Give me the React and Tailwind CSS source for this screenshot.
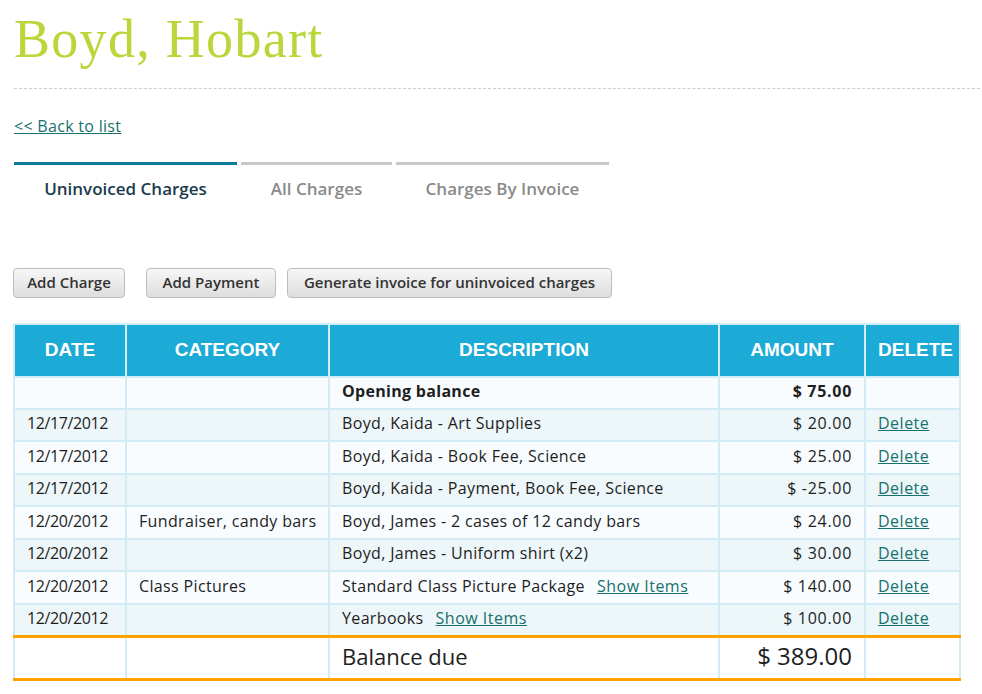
import React from 'react';

const rows = [
  { date: '12/17/2012', cat: '', desc: 'Boyd, Kaida - Art Supplies', amount: '$ 20.00' },
  { date: '12/17/2012', cat: '', desc: 'Boyd, Kaida - Book Fee, Science', amount: '$ 25.00' },
  { date: '12/17/2012', cat: '', desc: 'Boyd, Kaida - Payment, Book Fee, Science', amount: '$ -25.00' },
  { date: '12/20/2012', cat: 'Fundraiser, candy bars', desc: 'Boyd, James - 2 cases of 12 candy bars', amount: '$ 24.00' },
  { date: '12/20/2012', cat: '', desc: 'Boyd, James - Uniform shirt (x2)', amount: '$ 30.00' },
  { date: '12/20/2012', cat: 'Class Pictures', desc: 'Standard Class Picture Package', items: true, amount: '$ 140.00' },
  { date: '12/20/2012', cat: '', desc: 'Yearbooks', items: true, amount: '$ 100.00' },
];

const Btn = ({ children, className = '' }) => (
  <button className={`h-[30px] px-[12px] rounded-[4px] border border-[#bdbdbd] bg-gradient-to-b from-[#f7f7f7] to-[#dedede] text-[15px] font-semibold text-[#333] ${className}`}>
    {children}
  </button>
);

const cell = 'border-2 border-[#d3ebf4] px-3';
const link = 'text-[#17716c] underline tracking-[0.5px]';

export default function App() {
  return (
    <div className="min-h-screen bg-white px-[14px] text-[16px] text-[#1e1e1e]" style={{ fontFamily: '"Open Sans", Arial, sans-serif' }}>
      <h1 className="pt-[8px] text-[54px] leading-[62px] text-[#b9d63a] tracking-[1.3px]" style={{ fontFamily: '"Liberation Serif", serif' }}>
        Boyd, Hobart
      </h1>
      <div className="mt-[18px] w-[966px] border-t border-dashed border-[#cccccc]" />

      <a href="#" className="mt-[26px] inline-block text-[16px] leading-[22px] text-[#17716c] underline tracking-[0.3px]">
        &lt;&lt; Back to list
      </a>

      <div className="mt-[24px] flex gap-[4px]">
        <div className="w-[223px] border-t-[3px] border-[#0f7a99] pt-[11px] text-center text-[17px] font-semibold text-[#1b3b4c]">
          Uninvoiced Charges
        </div>
        <div className="w-[151px] border-t-[3px] border-[#c8c8c8] pt-[11px] text-center text-[17px] font-semibold text-[#8a8a8a]">
          All Charges
        </div>
        <div className="w-[213px] border-t-[3px] border-[#c8c8c8] pt-[11px] text-center text-[17px] font-semibold text-[#8a8a8a]">
          Charges By Invoice
        </div>
      </div>

      <div className="mt-[66px] flex -ml-px">
        <Btn className="w-[112px]">Add Charge</Btn>
        <Btn className="ml-[21px] w-[130px]">Add Payment</Btn>
        <Btn className="ml-[11px] w-[325px]">Generate invoice for uninvoiced charges</Btn>
      </div>

      <table className="mt-[25px] -ml-px w-[946px] table-fixed border-collapse">
        <colgroup>
          <col className="w-[112px]" />
          <col className="w-[203px]" />
          <col className="w-[390px]" />
          <col className="w-[146px]" />
          <col className="w-[95px]" />
        </colgroup>
        <thead>
          <tr className="h-[53px] bg-[#1caad6] text-[19px] font-bold text-white" style={{ fontFamily: '"Liberation Sans", Arial, sans-serif' }}>
            <th className={`${cell} text-center`}>DATE</th>
            <th className={`${cell} text-center`}>CATEGORY</th>
            <th className={`${cell} text-center`}>DESCRIPTION</th>
            <th className={`${cell} text-center`}>AMOUNT</th>
            <th className={`${cell} text-center`}>DELETE</th>
          </tr>
        </thead>
        <tbody className="leading-[20px]">
          <tr className="h-[32px] bg-[#f9fcfe] font-bold">
            <td className={cell} />
            <td className={cell} />
            <td className={`${cell} pb-[3px] tracking-[0.3px]`}>Opening balance</td>
            <td className={`${cell} pb-[3px] text-right tracking-[0.7px]`}>$ 75.00</td>
            <td className={cell} />
          </tr>
          {rows.map((r, i) => (
            <tr key={i} className={`h-[32.5px] ${i % 2 === 0 ? 'bg-[#edf6f9]' : 'bg-[#f9fcfe]'}`}>
              <td className={`${cell} pb-[3px] tracking-[-0.4px]`}>{r.date}</td>
              <td className={`${cell} pb-[3px] whitespace-nowrap tracking-[0.35px]`}>{r.cat}</td>
              <td className={`${cell} pb-[3px] whitespace-nowrap tracking-[0.35px]`}>
                {r.desc}
                {r.items && (
                  <a href="#" className={`ml-3 ${link}`}>Show Items</a>
                )}
              </td>
              <td className={`${cell} pb-[3px] text-right tracking-[0.7px]`}>{r.amount}</td>
              <td className={`${cell} pb-[3px]`}>
                <a href="#" className={link}>Delete</a>
              </td>
            </tr>
          ))}
          <tr className="h-[43px] border-y-[3px] border-[#ffa200] bg-white">
            <td className="border-x-2 border-[#d3ebf4]" />
            <td className="border-x-2 border-[#d3ebf4]" />
            <td className="border-x-2 border-[#d3ebf4] px-3 pb-[3px] text-[22px]">Balance due</td>
            <td className="border-x-2 border-[#d3ebf4] px-3 pb-[3px] text-right text-[24px]">$ 389.00</td>
            <td className="border-x-2 border-[#d3ebf4]" />
          </tr>
        </tbody>
      </table>
    </div>
  );
}
